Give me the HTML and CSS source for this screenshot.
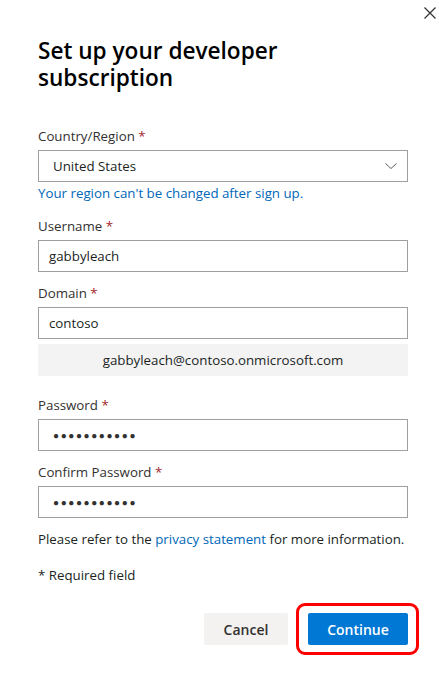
FILE: index.html
```html
<!DOCTYPE html>
<html lang="en">
<head>
<meta charset="utf-8">
<title>Set up your developer subscription</title>
<link rel="stylesheet" href="styles.css">
</head>
<body>
<div class="dialog">
  <button class="close" aria-label="Close">
    <svg width="12" height="12" viewBox="0 0 12 12"><path d="M0.5 0.5 L11.5 11.5 M11.5 0.5 L0.5 11.5" stroke="#323130" stroke-width="1.2" fill="none"/></svg>
  </button>
  <h1 class="title">Set up your developer subscription</h1>

  <div class="field field-country">
    <div class="label">Country/Region <span class="req">*</span></div>
    <div class="input select">
      <span>United States</span>
      <svg class="chev" width="12" height="6" viewBox="0 0 12 6"><path d="M0.5 0.5 L6 5.5 L11.5 0.5" stroke="#605e5c" stroke-width="1" fill="none"/></svg>
    </div>
    <div class="help">Your region can't be changed after sign up.</div>
  </div>

  <div class="field field-user">
    <div class="label">Username <span class="req">*</span></div>
    <div class="input">gabbyleach</div>
  </div>

  <div class="field field-domain">
    <div class="label">Domain <span class="req">*</span></div>
    <div class="input">contoso</div>
    <div class="preview">gabbyleach@contoso.onmicrosoft.com</div>
  </div>

  <div class="field field-pass">
    <div class="label">Password <span class="req">*</span></div>
    <div class="input dots">●●●●●●●●●●●</div>
  </div>

  <div class="field">
    <div class="label">Confirm Password <span class="req">*</span></div>
    <div class="input dots">●●●●●●●●●●●</div>
  </div>

  <p class="note">Please refer to the <a href="#">privacy statement</a> for more information.</p>
  <p class="required">* Required field</p>

  <div class="actions">
    <button class="btn btn-cancel">Cancel</button>
    <span class="highlight"><button class="btn btn-primary">Continue</button></span>
  </div>
</div>
</body>
</html>
```
FILE: styles.css
```css
* { box-sizing: border-box; }
html, body { margin: 0; padding: 0; background: #fff; }
body {
  font-family: "Open Sans", "Noto Sans", sans-serif;
  font-size: 13.3px;
  color: #323130;
  width: 439px;
  height: 682px;
  overflow: hidden;
}
.dialog {
  position: relative;
  padding: 37px 31px 0 38px;
}
.close {
  position: absolute;
  top: 6px;
  right: 2px;
  width: 14px;
  height: 14px;
  padding: 1px;
  border: 0;
  background: transparent;
  display: flex;
  align-items: center;
  justify-content: center;
}
.title {
  margin: 0 0 35px;
  font-size: 22.6px;
  line-height: 27px;
  font-weight: 600;
  color: #000;
  width: 320px;
}
.field { display: flex; flex-direction: column; margin-bottom: 11px; }
.label { line-height: 20px; margin-bottom: 4px; }
.req { color: #a4262c; }
.input {
  height: 32px;
  border: 1px solid #a19f9d;
  padding: 0 10px;
  display: flex;
  align-items: center;
  color: #201f1e;
}
.select { padding-left: 14px; justify-content: space-between; padding-right: 10px; }
.help { color: #0067b8; line-height: 20px; margin-top: 1px; }
.field-country { margin-bottom: 13px; }
.preview {
  margin-top: 5px;
  height: 32px;
  background: #f3f3f3;
  display: flex;
  align-items: center;
  justify-content: center;
  color: #201f1e;
}
.field-user { margin-bottom: 11px; }
.field-domain { margin-bottom: 19px; }
.dots {
  padding-left: 14px;
  font-size: 10px;
  letter-spacing: 1.6px;
  color: #323130;
}
.note { margin: 0; line-height: 20px; color: #201f1e; white-space: nowrap; }
.note a { color: #0067b8; text-decoration: none; }
.required { margin: 16px 0 0; line-height: 20px; color: #201f1e; }
.actions {
  display: flex;
  justify-content: flex-end;
  align-items: center;
  gap: 8px;
  margin-top: 28px;
}
.btn {
  height: 32px;
  border: 0;
  border-radius: 2px;
  font-family: inherit;
  font-size: 14px;
  font-weight: 600;
  padding: 0;
}
.btn-cancel { width: 84px; background: #f3f2f1; color: #323130; }
.btn-primary { width: 100px; background: #0078d4; color: #fff; display: block; }
.highlight {
  display: block;
  border: 3px solid #f00;
  border-radius: 9px;
  padding: 7px 8px 7px 9px;
  margin: -10px -11px -10px 0;
}
```
